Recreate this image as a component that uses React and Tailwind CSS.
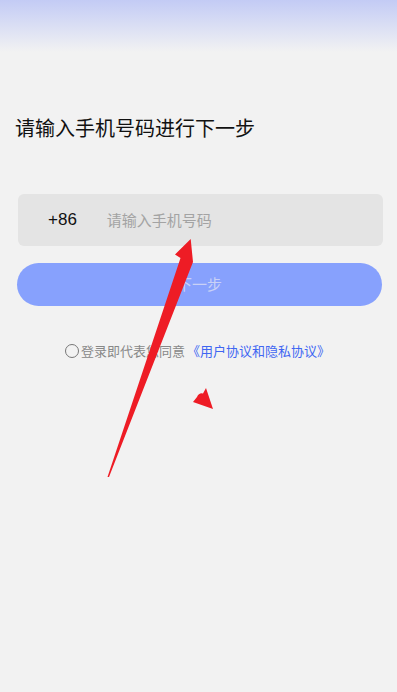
import React from "react";

export default function App() {
  const cjk = { fontFamily: '"Noto Sans CJK SC", "Noto Sans", sans-serif' };
  return (
    <div className="relative w-full min-h-[692px] bg-[#f2f2f2] overflow-hidden" style={cjk}>
      <div className="h-[52px] bg-gradient-to-b from-[#c3cbf5] to-[#f2f2f2]" />
      <h1 className="mt-[62px] pl-[15px] text-[20px] leading-[28px] text-[#111] font-normal">
        请输入手机号码进行下一步
      </h1>
      <div className="mt-[52px] ml-[18px] w-[365px] h-[52px] rounded-[6px] bg-[#e4e4e4] flex items-center">
        <span
          className="pl-[30px] text-[17px] text-[#111]"
          style={{ fontFamily: '"Liberation Sans", Arial, sans-serif' }}
        >
          +86
        </span>
        <span className="ml-[30px] text-[15px] text-[#a3a3a3]">请输入手机号码</span>
      </div>
      <div className="mt-[17px] ml-[17px] w-[365px] h-[43px] rounded-full bg-[#87a1fd] flex items-center justify-center">
        <span className="text-[15px] text-[#c9d1f6]">下一步</span>
      </div>
      <div className="mt-[36px] flex items-center justify-center pr-[2px]">
        <span className="w-[14px] h-[14px] rounded-full border-[1.3px] border-[#777] mr-[2px]" />
        <span className="text-[13px] leading-[18px] text-[#888]">登录即代表您同意</span>
        <span className="ml-[2px] text-[13px] leading-[18px] text-[#4066f2]">《用户协议和隐私协议》</span>
      </div>

      <svg
        className="absolute left-0 top-0 pointer-events-none"
        width="397"
        height="692"
        viewBox="0 0 397 692"
      >
        <path
          d="M190.7 239 L193 262 L109 477 L107.5 477 L180.5 258 L175 254.5 Z"
          fill="#ee1c25"
        />
        <path
          d="M193 402 L197 397 Q199 392.5 203 393.5 L206 388 L213 409 Z"
          fill="#ee1c25"
        />
      </svg>
    </div>
  );
}
